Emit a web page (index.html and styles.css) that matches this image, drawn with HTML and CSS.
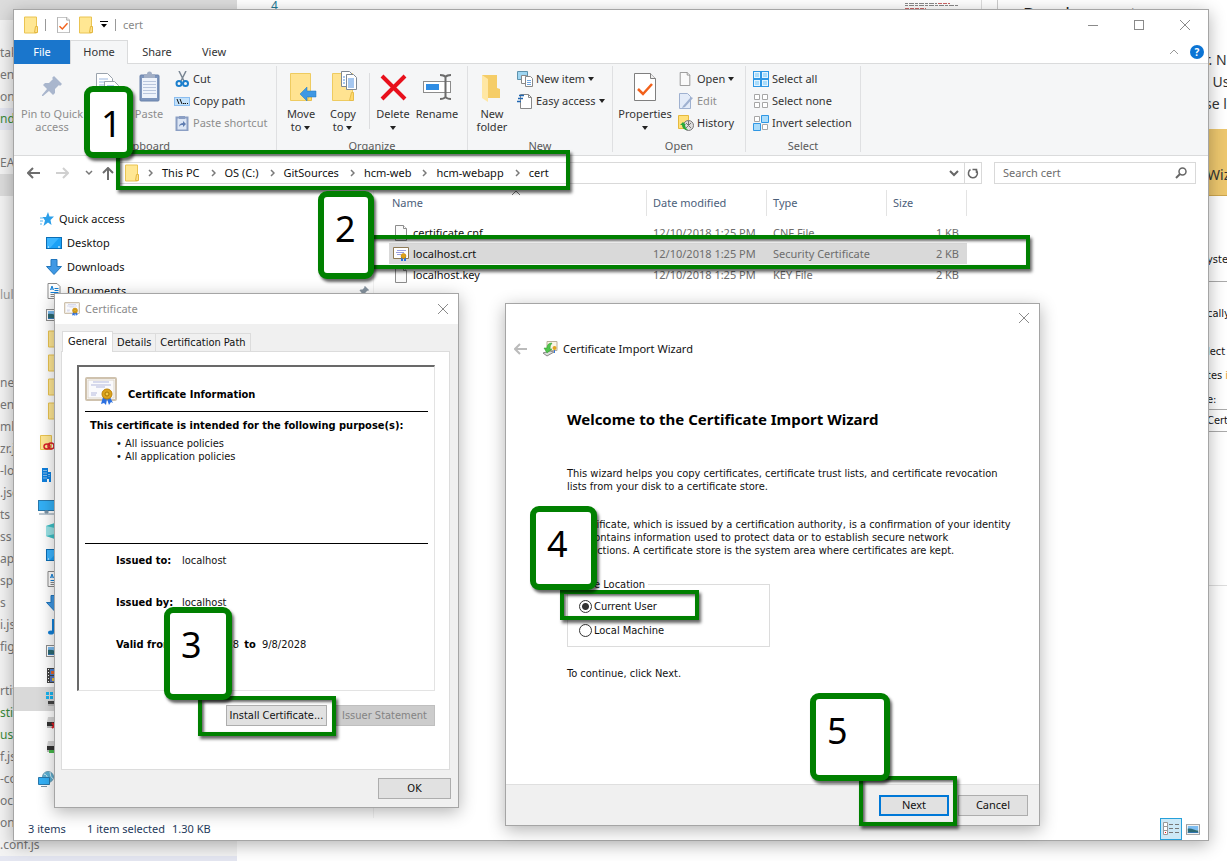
FILE: index.html
```html
<!DOCTYPE html>
<html lang="en">
<head>
<meta charset="utf-8">
<title>cert</title>
<link rel="stylesheet" href="styles.css">
</head>
<body>
<svg class="defs" aria-hidden="true">
  <symbol id="folder" viewBox="0 0 14 18"><path d="M.5 1h12v16H.5z" fill="#ffe793" stroke="#eac452"/><path d="M11.500 10.500h2v6h-3z" fill="#ffe08a" stroke="#e3b840"/></symbol>
  <symbol id="page" viewBox="0 0 14 16"><path d="M1.500.5h8l3 3v12h-11z" fill="#fafafa" stroke="#8c8c8c"/><path d="M9.500.5v3h3" fill="#fff" stroke="#8c8c8c"/></symbol>
  <symbol id="propdoc" viewBox="0 0 22 28"><path d="M.5.500h16l5 5v22H.5z" fill="#fff" stroke="#7f7f7f"/><path d="M16.500.5v5h5" fill="#eee" stroke="#7f7f7f"/><path d="M4 16l5 5 9-10" fill="none" stroke="#f2611b" stroke-width="2.500"/></symbol>
  <symbol id="down" viewBox="0 0 7 4"><path d="M0 0h6L3 4z" fill="#222"/></symbol>
  <symbol id="close" viewBox="0 0 12 12"><path d="M1 1l10 10M11 1L1 11" stroke="#8a8a8a" fill="none"/></symbol>
  <symbol id="cert" viewBox="0 0 32 28"><rect x="1" y="1" width="30" height="22" rx="1" fill="#fff" stroke="#cfc2ae" stroke-width="2"/><rect x="3" y="3" width="26" height="18" fill="#fafafc" stroke="#ddd6ca"/><path d="M8 5h16M6 8h20M11 10h9M6 16h6M6 18h5" stroke="#b4b9dd" fill="none"/><path d="M18 20l-2 7 3-1 2 2 1-6 2 6 2-3 2 1-3-6z" fill="#2c70e0"/><circle cx="22" cy="17" r="5" fill="#dba31c" stroke="#bd8207"/><circle cx="22" cy="17" r="2" fill="#f3ca4b" stroke="#a97704"/></symbol>
  <symbol id="certfile" viewBox="0 0 16 14"><path d="M.5.500h15v11H.5z" fill="#fff" stroke="#8f7a55"/><path d="M4 3.500h9M3 5.500h8M4 7.500h4" stroke="#9b9fe0"/><path d="M8 10h2v4H8zM11 10h2v4h-2z" fill="#2c70e0"/><circle cx="10.500" cy="9" r="2.500" fill="#dfa21a" stroke="#b67c05" stroke-width=".5"/></symbol>
  <symbol id="screen" viewBox="0 0 16 12"><rect x=".5" y=".5" width="15" height="11" fill="#1ba1f6" stroke="#0b6eb5"/><path d="M1 1h12L4 11H1z" fill="#3bb5ff"/><path d="M2 10h1M12 10h2" stroke="#fff"/></symbol>
  <symbol id="pc" viewBox="0 0 17 16"><rect x=".5" y="1.500" width="16" height="10" fill="#33b0f6" stroke="#2a78ab"/><path d="M7 12h3v2H7zM1 15h15" fill="#7a92a5" stroke="#7a92a5"/></symbol>
  <symbol id="arrowdown" viewBox="0 0 16 16"><path d="M5 .5h6v7h4.500L8 15.500.5 7.500H5z" fill="#3f98e4" stroke="#2176bd"/></symbol>
  <symbol id="textdoc" viewBox="0 0 13 16"><path d="M.5.500h9l3 3v12H.5z" fill="#fff" stroke="#8b8b8b"/><path d="M3 7l1.500-4L6 7M3.500 6h2" stroke="#1180d8" fill="none"/><path d="M7 5.500h4M7 7.500h4M3 9.500h8" stroke="#1180d8"/><path d="M3 11.500h8M3 13.500h6" stroke="#888"/></symbol>
  <symbol id="picture" viewBox="0 0 16 12"><rect x=".5" y=".5" width="15" height="11" fill="#fff" stroke="#8d8d8d"/><path d="M2 2h12v5H2z" fill="#7dbdf1"/><path d="M2 5c4-1 8 2 12 2v3H2z" fill="#2d6a73"/><path d="M2 9h12v1H2z" fill="#3579b7"/></symbol>
  <symbol id="drive" viewBox="0 0 16 14"><path d="M2 1h14v5H1z" fill="#d5d5d5"/><path d="M1 6h15v4H1z" fill="#333"/><path d="M1 10h15v2H1z" fill="#bdbdbd"/></symbol>
  <symbol id="pin" viewBox="0 0 20 20"><path d="M12 0l8 8-2 2-1-1-4 4v4l-2 2-4-4-6 5-1 0 0-1 5-6-4-4 2-2h4l4-4-1-1z"/></symbol>
  <symbol id="back" viewBox="0 0 13 12"><path d="M6 1L1 6l5 5M1 6h12" fill="none" stroke="currentColor" stroke-width="2"/></symbol>
  <symbol id="chev" viewBox="0 0 5 8"><path d="M1 1l3 3-3 3" fill="none" stroke="#7a7a7a" stroke-width="1.500"/></symbol>
</svg>

<div class="editor-side" aria-hidden="true">
  <div class="side-head"></div>
  <div class="line">tak</div><div class="line">ent.</div><div class="line">on</div><div class="line green hl">nd</div><div class="line"></div><div class="line">EAD</div><div class="line bar"></div>
  <div class="line"></div><div class="line"></div><div class="line"></div><div class="line"></div><div class="line dim">lule</div><div class="line"></div><div class="line"></div><div class="line"></div>
  <div class="line">ne</div><div class="line">ent</div><div class="line">ml</div><div class="line">zr.j</div><div class="line">-lo</div><div class="line">.jsc</div><div class="line">ts</div><div class="line">ss</div><div class="line">ap</div><div class="line">sp</div><div class="line">s</div><div class="line">i.js</div><div class="line">fig</div><div class="line"></div><div class="line">rtif</div><div class="line green">sti</div><div class="line green">ust</div><div class="line">f.js</div><div class="line">-co</div><div class="line">ock</div><div class="line">on</div><div class="line">.conf.js</div><div class="line hl"></div>
</div>
<div class="editor-top"><span>4</span></div>
<svg class="minimap" width="60" height="10"><path d="M0 3.500h32M0 5.500h54" stroke="#888" stroke-dasharray="3 1 5 1"/><path d="M33 3.500h12M0 8.500h21" stroke="#c66" stroke-dasharray="4 1"/></svg>
<div class="article">
  <div class="art-title">Development</div>
  <div class="art-line">r. N</div><div class="art-line">. Us</div><div class="art-line">se l</div>
  <div class="art-box">Wiz</div>
  <div class="art-dialog">
    <p class="d1">yste</p><p class="d2">cally</p><p class="d3">lect</p><p class="d3">tes <i>i</i></p><p class="d4">e:</p><p class="d5">Certi</p>
  </div>
</div>

<main class="explorer window">
  <header class="titlebar">
    <svg class="tb-folder" width="14" height="18"><use href="#folder"/></svg><i class="vbar"></i>
    <svg class="tb-prop" width="13" height="16"><use href="#propdoc"/></svg>
    <svg class="tb-folder2" width="14" height="18"><use href="#folder"/></svg>
    <svg class="tb-more" width="8" height="8" viewBox="0 0 8 8"><path d="M0 .5h8" stroke="#000"/><path d="M1 3h6L4 6.500z"/></svg><i class="vbar"></i>
    <h1>cert</h1>
    <div class="win-controls">
      <button aria-label="Minimize"><svg width="12" height="12"><path d="M1 6.500h10" stroke="#8a8a8a"/></svg></button>
      <button aria-label="Maximize"><svg width="12" height="12"><rect x="1.500" y="1.500" width="9" height="9" fill="none" stroke="#8a8a8a"/></svg></button>
      <button aria-label="Close"><svg width="12" height="12"><use href="#close"/></svg></button>
    </div>
  </header>
  <nav class="tabs">
    <button class="file">File</button><button class="active">Home</button><button class="share">Share</button><button>View</button>
    <span class="help"><svg width="10" height="6"><path d="M1 5l4-4 4 4" fill="none" stroke="#999"/></svg><b>?</b></span>
  </nav>
  <section class="ribbon">
    <div class="group g-clip">
      <div class="tools">
        <button class="big wide off"><svg width="32" height="32" viewBox="-6 -5 32 32" fill="#a9b6cd"><use href="#pin" width="20" height="20"/></svg>Pin to Quick<br>access</button>
        <button class="big"><svg width="32" height="32" viewBox="0 0 32 32"><path d="M5.500 2.500h11l5 5v18h-16z" fill="#fff" stroke="#9aa3ad"/><path d="M8 8h9M8 11h9M8 14h9" stroke="#9bb7e0"/><path d="M13.500 10.500h10l4 4v14h-14z" fill="#fff" stroke="#9aa3ad"/><path d="M16 15h7M16 18h9" stroke="#5b95d8"/></svg></button>
        <button class="big off"><svg width="32" height="32" viewBox="0 0 32 32"><rect x="7" y="4" width="19" height="26" rx="1" fill="#7d95bd" stroke="#6a82aa"/><path d="M9 7h15v20H9z" fill="#eef3fb"/><path d="M10 10.500h13M10 13.500h13M10 16.500h13M10 19.500h13M10 22.500h13" stroke="#b9c6dd"/><path d="M11 3h3a2 2 0 0 1 5 0h3v4H11z" fill="#a2afc6"/></svg>Paste</button>
        <div class="small">
          <button><svg width="16" height="16"><path d="M5 0l5 10M12 0L7 10" stroke="#7a8794" stroke-width="1.500"/><circle cx="5" cy="12.500" r="2.500" fill="none" stroke="#1b7fcd" stroke-width="2"/><circle cx="11.500" cy="12.500" r="2.500" fill="none" stroke="#1b7fcd" stroke-width="2"/></svg>Cut</button>
          <button><svg width="16" height="16"><rect x=".5" y="4.500" width="15" height="8" fill="#c2e1fa" stroke="#8abdf0"/><path d="M3 6l2 5M6 6l2 5M9 10.500h1.500M11 10.500h1M13 10.500h1" stroke="#111"/></svg>Copy path</button>
          <button class="off"><svg width="16" height="16"><path d="M2.500 2.500h11v13h-11z" fill="#dce6f5" stroke="#8b9fc4" stroke-width="2"/><path d="M5 1h6v3H5z" fill="#8b9fc4"/><path d="M5 12c0-3 2-4 4-4V6l3 3-3 3v-2c-2 0-3 0-4 2z" fill="#5f7db1"/></svg>Paste shortcut</button>
        </div>
      </div>
      <h2>Clipboard</h2>
    </div>
    <div class="group g-org">
      <div class="tools">
        <button class="big"><svg width="32" height="32" viewBox="0 0 32 32"><path d="M5.500 2.500h20v27h-20z" fill="#ffe391" stroke="#eecb60"/><path d="M24.500 21.500h2v8h-4z" fill="#ffd86b" stroke="#e6bd4a"/><path d="M15 23l7-7v4h9v6h-9v4z" fill="#3f98e4" stroke="#2176bd" stroke-width=".5"/></svg>Move<br>to <svg class="dd" width="7" height="4"><use href="#down"/></svg></button>
        <button class="big"><svg width="32" height="32" viewBox="0 0 32 32"><path d="M5.500 2.500h20v27h-20z" fill="#ffe391" stroke="#eecb60"/><path d="M24.500 21.500h2v8h-4z" fill="#ffd86b" stroke="#e6bd4a"/><path d="M14.500.5h8l3 3v12h-11z" fill="#fff" stroke="#7f8892"/><path d="M19.500 3.500h7l3 3v12h-10z" fill="#fff" stroke="#7f8892"/><path d="M21 8h6M21 10h6M21 12h6M21 14h6M21 16h6M16 6h2M16 9h2M16 12h2" stroke="#4c8fe0"/></svg>Copy<br>to <svg class="dd" width="7" height="4"><use href="#down"/></svg></button>
        <i class="sep"></i>
        <button class="big"><svg width="32" height="32"><path d="M5 5l23 23M28 5L5 28" stroke="#e8101c" stroke-width="4"/></svg>Delete<br><svg class="dd" width="7" height="4"><use href="#down"/></svg></button>
        <button class="big mid"><svg width="32" height="32"><rect x="2.500" y="10.500" width="27" height="11" fill="#fff" stroke="#8c8c8c"/><path d="M5 13h13v6H5z" fill="#2f8de4"/><path d="M24.500 5v22M19 4q4 0 5.500 2Q26 4 30 4M19 28q4 0 5.500-2 1.500 2 5.500 2" stroke="#6b6b6b" stroke-width="2" fill="none"/></svg>Rename</button>
      </div>
      <h2>Organize</h2>
    </div>
    <div class="group g-new">
      <div class="tools">
        <button class="big"><svg width="32" height="32"><path d="M6 4h15v13l3 1v9H6z" fill="#f5cd68"/><path d="M6 4l6 4v23l-6-4z" fill="#ffe7a4"/></svg>New<br>folder</button>
        <div class="small">
          <button><svg width="16" height="16"><path d="M.5.500h10v8H.5z" fill="#9fd6f2" stroke="#5e93ad"/><path d="M4.500 4.500h5v8h-5z" fill="#fff" stroke="#888"/><path d="M8.500 5.500h5l2 2v8h-7z" fill="#fff" stroke="#888"/><path d="M10 9.500h4M10 11.500h4M10 13.500h4" stroke="#6fa5e0"/></svg>New item <svg class="dd" width="7" height="4"><use href="#down"/></svg></button>
          <button><svg width="16" height="16"><path d="M3.500 1.500h8l3 3v11h-11z" fill="#fff" stroke="#888"/><path d="M11.500 1.500v3h3" fill="none" stroke="#888"/><path d="M2 2.500h5M1 5.500h5M0 8.500h4" stroke="#2167b2" stroke-width="1.500"/></svg>Easy access <svg class="dd" width="7" height="4"><use href="#down"/></svg></button>
        </div>
      </div>
      <h2>New</h2>
    </div>
    <div class="group g-open">
      <div class="tools">
        <button class="big props"><svg width="32" height="32" viewBox="-5 -2 32 32"><use href="#propdoc" width="22" height="28"/></svg>Properties<br><svg class="dd" width="7" height="4"><use href="#down"/></svg></button>
        <div class="small">
          <button><svg width="16" height="16"><use href="#page" x="0" y="1" width="14" height="14"/></svg>Open <svg class="dd" width="7" height="4"><use href="#down"/></svg></button>
          <button class="off"><svg width="16" height="16"><path d="M1.500.5h8l3 3v12h-11z" fill="#e3ebf8" stroke="#9fb1d0"/><path d="M5 13l8-9 2 1-8 9-3 1z" fill="#9fb1d0"/></svg>Edit</button>
          <button><svg width="16" height="16"><path d="M.5.500h10v13H.5z" fill="#ffe07a" stroke="#e5b93e"/><circle cx="10.500" cy="10.500" r="5" fill="#ddd" stroke="#777"/><path d="M8 8l5 5M13 8l-5 5M10.500 6v4" stroke="#777"/><path d="M2 10l3-3 3 3H7q0 3 3 5-6 0-6-5z" fill="#27a83b"/></svg>History</button>
        </div>
      </div>
      <h2>Open</h2>
    </div>
    <div class="group g-sel">
      <div class="tools">
        <div class="small">
          <button><svg width="16" height="16"><path d="M0 0h16v16H0z" fill="#2f97e4"/><path d="M1 1h6v6H1zM9 1h6v6H9zM1 9h6v6H1zM9 9h6v6H9z" fill="#e4f4ff"/><path d="M2 2h4v4H2zM10 2h4v4h-4zM2 10h4v4H2zM10 10h4v4h-4z" fill="#a9dcfb"/></svg>Select all</button>
          <button><svg width="16" height="16"><path d="M1.500 1.500h5v5h-5zM9.500 1.500h5v5h-5zM1.500 9.500h5v5h-5zM9.500 9.500h5v5h-5z" fill="#fff" stroke="#a6a6a6"/></svg>Select none</button>
          <button><svg width="16" height="16"><path d="M1.500 1.500h5v5h-5zM9.500 9.500h5v5h-5z" fill="#fff" stroke="#a6a6a6"/><path d="M8.500.5h7v7h-7zM.5 8.500h7v7h-7z" fill="#a9dcfb" stroke="#2f97e4"/></svg>Invert selection</button>
        </div>
      </div>
      <h2>Select</h2>
    </div>
  </section>
  <div class="address">
    <button class="nav-b" aria-label="Back"><svg width="13" height="12"><use href="#back"/></svg></button>
    <button class="nav-b fwd" aria-label="Forward"><svg width="13" height="12" viewBox="0 0 13 12"><path d="M7 1l5 5-5 5M12 6H0" fill="none" stroke="#d0d0d0" stroke-width="2"/></svg></button>
    <button class="nav-c" aria-label="Recent"><svg width="8" height="6"><path d="M1 1l3 3 3-3" fill="none" stroke="#777" stroke-width="1.500"/></svg></button>
    <button class="nav-u" aria-label="Up"><svg width="12" height="13"><path d="M1 6l5-5 5 5M6 1v12" fill="none" stroke="#6d6d6d" stroke-width="2"/></svg></button>
    <nav class="crumbs"><svg width="14" height="18"><use href="#folder"/></svg><svg class="cv" width="5" height="8"><use href="#chev"/></svg><a href="#">This PC</a><svg class="cv" width="5" height="8"><use href="#chev"/></svg><a href="#">OS (C:)</a><svg class="cv" width="5" height="8"><use href="#chev"/></svg><a href="#">GitSources</a><svg class="cv" width="5" height="8"><use href="#chev"/></svg><a href="#">hcm-web</a><svg class="cv" width="5" height="8"><use href="#chev"/></svg><a href="#">hcm-webapp</a><svg class="cv" width="5" height="8"><use href="#chev"/></svg><a href="#">cert</a>
      <svg class="drop" width="10" height="7"><path d="M1 1l4 4 4-4" fill="none" stroke="#666" stroke-width="2"/></svg></nav>
    <button class="refresh" aria-label="Refresh"><svg width="12" height="12"><path d="M3.500 2.500A4.500 4.500 0 1 0 9 3" fill="none" stroke="#666" stroke-width="1.500"/><path d="M5.500 2.500H9.500V6" fill="none" stroke="#666" stroke-width="1.500"/></svg></button>
    <label class="search"><input type="text" placeholder="Search cert" aria-label="Search cert"><svg width="12" height="12"><circle cx="7.500" cy="4.500" r="3.500" fill="none" stroke="#666" stroke-width="1.500"/><path d="M5 7l-4 4" stroke="#666" stroke-width="2"/></svg></label>
  </div>
  <div class="content">
    <aside class="tree">
      <div class="node root"><svg width="14" height="14" viewBox="0 0 14 14"><path d="M8 0l1.500 4.500H14L10.500 8l1 5L8 10.500 3.500 14 5 8.500 2.500 5H6z" fill="#2c9fe9"/><path d="M0 6h3M0 9h3M0 12h2" stroke="#58b5f0"/></svg>Quick access</div>
      <div class="node"><svg width="16" height="12"><use href="#screen"/></svg>Desktop</div>
      <div class="node"><svg width="16" height="16"><use href="#arrowdown"/></svg>Downloads</div>
      <div class="node"><svg width="16" height="16"><use href="#textdoc"/></svg>Documents<svg class="pinned" width="10" height="10" fill="#8794a0"><use href="#pin"/></svg></div>
      <div class="node"><svg width="16" height="12"><use href="#picture"/></svg></div>
      <div class="node"><svg width="18" height="18"><use href="#folder"/></svg></div>
      <div class="node"><svg width="18" height="18"><use href="#folder"/></svg></div>
      <div class="node"><svg width="18" height="18"><use href="#folder"/></svg></div>
      <div class="node"><svg width="18" height="18"><use href="#folder"/></svg></div>
      <div class="node root gap"><svg width="15" height="16"><path d="M.5.500h11v14H.5z" fill="#ffe793" stroke="#eac452"/><ellipse cx="7" cy="11.500" rx="3" ry="2.500" fill="none" stroke="#d8222a" stroke-width="1.500"/><ellipse cx="11" cy="11" rx="3" ry="3" fill="none" stroke="#d8222a" stroke-width="1.500"/></svg></div>
      <div class="node root gap"><svg width="14" height="14"><path d="M2 0h6v4h3v10H9v-3H7v3H2z" fill="#0f7fdd"/><path d="M4 2v9M6 2v9M9 6v3" stroke="#fff" stroke-dasharray="1 1.500"/></svg></div>
      <div class="node pcroot gap"><svg width="17" height="16"><use href="#pc"/></svg></div>
      <div class="node"><svg width="16" height="16"><path d="M0 3l9-3v16l-9-3z" fill="#9be3e6"/><path d="M0 3l9-3v5zM0 13l9 3v-5z" fill="#3cc0c6"/></svg></div>
      <div class="node"><svg width="16" height="12"><use href="#screen"/></svg></div>
      <div class="node"><svg width="16" height="16"><use href="#textdoc"/></svg></div>
      <div class="node"><svg width="16" height="16"><use href="#arrowdown"/></svg></div>
      <div class="node"><svg width="16" height="16"><ellipse cx="5" cy="13.500" rx="3" ry="2" fill="#1180d8"/><path d="M7 13V0q3 4 5 5" stroke="#1180d8" stroke-width="2" fill="none"/></svg></div>
      <div class="node"><svg width="16" height="12"><use href="#picture"/></svg></div>
      <div class="node"><svg width="16" height="15"><path d="M1 0h14v15H1z" fill="#444"/><path d="M4 1h11v6H4z" fill="#4b7fd0"/><path d="M4 8h11v6H4z" fill="#5575c0"/><path d="M5 3h4v3H5z" fill="#e2662a"/><path d="M6 10h5v3H6z" fill="#e8bd3b"/><path d="M2.500 1v14" stroke="#fff" stroke-dasharray="1 2"/></svg></div>
      <div class="node sel"><svg width="16" height="16"><path d="M0 1h3v3H0zM4 1h3v3H4zM0 5h3v3H0zM4 5h3v3H4z" fill="#18b5f1"/><path d="M2 10h14v3H2z" fill="#444"/><path d="M2 13h14v2H2z" fill="#bbb"/></svg></div>
      <div class="node"><svg width="16" height="14"><use href="#drive"/><path d="M6 7l5 5M11 7l-5 5" stroke="#e01b24" stroke-width="2"/></svg></div>
      <div class="node"><svg width="16" height="14"><use href="#drive"/><path d="M3 10h13v3H3z" fill="#47b94b"/></svg></div>
      <div class="node pcroot gap"><svg width="17" height="16"><circle cx="10" cy="6" r="5.500" fill="#5bb0d4" stroke="#6e9db4"/><path d="M6 3q4 1 3 5M12 1q0 5 3 7" stroke="#d3ecf5" fill="none"/><path d="M.5 6.500h11v7H.5z" fill="#33b0f6" stroke="#2a78ab"/><path d="M3 15.500h6" stroke="#7a92a5"/></svg></div>
    </aside>
    <section class="files">
      <table>
        <thead><tr><th class="c-name">Name<svg class="sort" width="9" height="5"><path d="M0 5l4-4 4 4" fill="none" stroke="#777"/></svg></th><th class="c-date">Date modified</th><th class="c-type">Type</th><th class="c-size">Size</th></tr></thead>
        <tbody>
          <tr><td><span><svg width="16" height="16"><use href="#page"/></svg>certificate.cnf</span></td><td>12/10/2018 1:25 PM</td><td>CNF File</td><td class="num">1 KB</td></tr>
          <tr class="selected"><td><span><svg width="16" height="14"><use href="#certfile"/></svg>localhost.crt</span></td><td>12/10/2018 1:25 PM</td><td>Security Certificate</td><td class="num">2 KB</td></tr>
          <tr><td><span><svg width="16" height="16"><use href="#page"/></svg>localhost.key</span></td><td>12/10/2018 1:25 PM</td><td>KEY File</td><td class="num">2 KB</td></tr>
        </tbody>
      </table>
    </section>
  </div>
  <footer class="status"><span class="s1">3 items</span><span class="s2">1 item selected</span><span class="s3">1.30 KB</span>
    <div class="views"><button class="on" aria-label="Details"><svg width="16" height="14"><path d="M.5.500h4v4h-4zM.5 4.500h4v4h-4zM.5 8.500h4v4h-4z" fill="#fff" stroke="#999"/><path d="M6 2.500h4M12 2.500h4M6 6.500h4M12 6.500h4M6 10.500h4M12 10.500h4" stroke="#777"/><path d="M2 10h1v1H2z" fill="red"/></svg></button><button aria-label="Large icons"><svg width="14" height="11"><use href="#picture"/></svg></button></div>
  </footer>
</main>

<section class="certificate window">
  <header><svg width="16" height="14"><use href="#cert"/></svg><h2>Certificate</h2><button aria-label="Close certificate"><svg width="12" height="12"><use href="#close"/></svg></button></header>
  <div class="cert-body">
    <nav class="cert-tabs"><button class="active">General</button><button>Details</button><button>Certification Path</button></nav>
    <div class="sheet">
      <div class="info">
        <div class="info-head"><svg width="32" height="28"><use href="#cert"/></svg><h3>Certificate Information</h3></div>
        <div class="purpose"><h4>This certificate is intended for the following purpose(s):</h4><ul><li>All issuance policies</li><li>All application policies</li></ul></div>
        <dl><div><dt>Issued to:</dt><dd>localhost</dd></div><div><dt>Issued by:</dt><dd>localhost</dd></div><div><dt>Valid from</dt><dd>12/10/2018 <b>to</b> 9/8/2028</dd></div></dl>
      </div>
      <div class="actions"><button class="btn">Install Certificate...</button><button class="btn" disabled>Issuer Statement</button></div>
    </div>
    <div class="okrow"><button class="btn">OK</button></div>
  </div>
</section>

<section class="wizard window">
  <div class="wiz-close"><button aria-label="Close wizard"><svg width="12" height="12"><use href="#close"/></svg></button></div>
  <header><button aria-label="Previous"><svg width="13" height="12"><use href="#back"/></svg></button><svg width="16" height="16"><path d="M5 .5h10v9H5z" fill="#faf4e4" stroke="#b8ae98"/><circle cx="12.500" cy="7" r="2" fill="#e0a31d"/><path d="M12 9h1v3h-1z" fill="#3579df"/><path d="M1 12l7-2 4 1-7 4z" fill="#ddd" stroke="#888"/><path d="M10 2q-5 0-5 5H2l3 5 5-4H8q0-4 2-6z" fill="#4fc54b" stroke="#2c972e" stroke-width=".5"/></svg><h2>Certificate Import Wizard</h2></header>
  <div class="wiz-body">
    <h3>Welcome to the Certificate Import Wizard</h3>
    <p class="p1">This wizard helps you copy certificates, certificate trust lists, and certificate revocation<br>lists from your disk to a certificate store.</p>
    <p class="p2">A certificate, which is issued by a certification authority, is a confirmation of your identity<br>and contains information used to protect data or to establish secure network<br>connections. A certificate store is the system area where certificates are kept.</p>
    <fieldset><legend>Store Location</legend><label><input type="radio" name="store" checked>Current User</label><label><input type="radio" name="store">Local Machine</label></fieldset>
    <p>To continue, click Next.</p>
  </div>
  <footer><button class="btn next">Next</button><button class="btn">Cancel</button></footer>
</section>

<div class="mark m-address"></div><div class="mark m-row"></div><div class="mark m-install"></div><div class="mark m-user"></div><div class="mark m-next"></div>
<div class="step s-1">1</div><div class="step s-2">2</div><div class="step s-3">3</div><div class="step s-4">4</div><div class="step s-5">5</div>
</body>
</html>
```
FILE: styles.css
```css
:root {
  --ui: "Noto Sans", "Open Sans", sans-serif;
  --dlg: "DejaVu Sans Condensed", "DejaVu Sans", sans-serif;
  --green: #008000;
}
* { box-sizing: border-box; }
html, body { height: 100%; }
body { margin: 0; overflow: hidden; position: relative; background: #fff; font: 11px/16px var(--ui); color: #111; }
h1, h2, h3, h4, p, ul, dl, dd { margin: 0; padding: 0; font-weight: normal; font-size: inherit; }
button { font: inherit; color: inherit; background: none; border: 0; padding: 0; }
svg { display: block; flex: none; }
i { font-style: normal; }
.defs { position: absolute; width: 0; height: 0; }

/* backdrop */
.editor-side { position: absolute; left: 0; top: 0; bottom: 0; width: 237px; overflow: hidden; background: #f3f3f3; font-size: 12px; color: #777; }
.side-head { height: 20px; margin-bottom: 22px; background: #dcdcdc; }
.line { height: 22px; line-height: 22px; }
.green { color: #3a8a3a; }
.dim { color: #999; }
.hl { background: #e4e6f1; }
.bar { background: #dcdcdc; }
.editor-top { position: absolute; left: 237px; right: 245px; top: 0; height: 22px; padding-left: 34px; font-size: 12px; line-height: 12px; color: #237893; border-right: 1px solid #ddd; }
.minimap { position: absolute; left: 905px; top: 0; }
.article { position: absolute; left: 997px; right: 0; top: 0; bottom: 0; overflow: hidden; font-size: 14px; color: #333; white-space: nowrap; }
.art-title { height: 49px; padding: 3px 0 0 25px; border-left: 1px solid #ccc; font-size: 18px; line-height: 22px; color: #222; }
.art-line { height: 22px; line-height: 22px; padding-left: 208px; }
.art-box { height: 67px; margin-top: 14px; padding: 34px 0 0 210px; line-height: 24px; background: #edc76e; border-bottom: 1px solid #cda64e; }
.art-dialog { height: 390px; border-bottom: 1px solid #ddd; font: 11px/16px var(--dlg); color: #111; padding-top: 56px; }
.art-dialog p { padding-left: 210px; }
.art-dialog i { color: #e8a030; }
.d1 { height: 30px; border-bottom: 1px solid #aaa; }
.d2 { height: 62px; padding-top: 24px; }
.d3 { height: 24px; }
.d4 { height: 17px; }
.d5 { height: 23px; line-height: 21px; border: solid #aaa; border-width: 1px 0; }

.window { position: absolute; display: flex; flex-direction: column; background: #fff; border: 1px solid #a5a5a5; box-shadow: 0 4px 16px rgba(0,0,0,.3); }

/* explorer */
.explorer { left: 13px; right: 18px; top: 9px; bottom: 20px; }
.titlebar { height: 30px; display: flex; align-items: center; padding-left: 10px; }
.vbar { width: 1px; height: 12px; background: #999; }
.tb-folder { margin-right: 7px; }
.tb-prop { margin: 0 9px 0 11px; }
.tb-folder2 { margin-right: 7px; }
.tb-more { margin-right: 7px; }
.titlebar h1 { margin-left: 7px; color: #888; }
.win-controls { margin-left: auto; display: flex; }
.win-controls button { width: 46px; height: 28px; display: grid; place-items: center; }
.tabs { height: 24px; display: flex; border-bottom: 1px solid #dadbdc; }
.tabs button { width: 56px; height: 24px; line-height: 22px; color: #333; }
.tabs .file { background: #1a76cc; color: #fff; }
.tabs .active { width: 58px; padding-bottom: 2px; line-height: 20px; background: #f5f6f7; border: 1px solid #dadbdc; border-bottom: 0; }
.tabs .share { width: 58px; }
.help { margin-left: auto; display: flex; align-items: center; gap: 11px; padding-right: 4px; }
.help b { width: 14px; height: 14px; border-radius: 50%; background: #0b74d4; color: #fff; line-height: 14px; text-align: center; font-size: 10px; }
.ribbon { height: 92px; display: flex; background: #f5f6f7; border-bottom: 1px solid #dadbdc; padding-top: 2px; color: #333; }
.group { height: 86px; display: flex; flex-direction: column; justify-content: space-between; border-right: 1px solid #dfe0e2; }
.group h2 { text-align: center; line-height: 13px; color: #5a5a5a; }
.tools { display: flex; align-items: flex-start; padding: 2px 0 0 3px; height: 70px; }
.g-clip { width: 263px; }
.g-clip .tools { padding-left: 4px; }
.g-org { width: 191px; }
.g-new { width: 145px; }
.g-open { width: 133px; }
.g-sel { width: 115px; }
.big { width: 42px; padding-top: 3px; line-height: 13px; white-space: nowrap; display: block; }
.big > svg:first-child { margin: 0 auto 4px; }
.wide { width: 68px; }
.mid { width: 46px; }
.props { width: 58px; }
.off { color: #8d8d8d; }
.dd { display: inline-block; vertical-align: middle; }
.sep { width: 1px; height: 56px; margin: 5px 2px 0 5px; background: #dcdddf; }
.small { padding-left: 4px; }
.small button { display: flex; align-items: center; gap: 3px; height: 22px; white-space: nowrap; }
.address { height: 34px; display: flex; align-items: center; padding: 0 12px 0 13px; }
.nav-b { width: 29px; color: #6d6d6d; }
.nav-c { width: 17px; }
.nav-u { width: 17px; }
.crumbs { flex: 1; height: 22px; border: 1px solid #d9d9d9; display: flex; align-items: center; padding: 0 5px; }
.crumbs a { color: #111; text-decoration: none; padding-right: 2px; }
.cv { margin: 0 9px; }
.drop { margin-left: auto; }
.refresh { width: 17px; height: 22px; border: 1px solid #d9d9d9; border-left: 0; display: grid; place-items: center; }
.search { width: 202px; height: 22px; margin-left: 12px; border: 1px solid #d9d9d9; display: flex; align-items: center; padding: 0 8px; }
.search input { flex: 1; min-width: 0; border: 0; padding: 0; font: inherit; outline: 0; }
.search input::placeholder { color: #6d6d6d; }
.content { flex: 1; min-height: 0; display: flex; overflow: hidden; }
.tree { width: 360px; padding-top: 17px; border-right: 1px solid #f2f2f2; overflow: hidden; }
.node { height: 24px; display: flex; align-items: center; gap: 5px; padding-left: 32px; }
.root { padding-left: 26px; }
.pcroot { padding-left: 24px; }
.gap { margin-top: 8px; }
.sel { background: #d9d9d9; }
.pinned { margin-left: auto; margin-right: 4px; }
.files { flex: 1; padding-left: 15px; }
table { border-collapse: separate; border-spacing: 0; table-layout: fixed; width: 578px; }
th { height: 26px; padding: 0 0 0 6px; text-align: left; font-weight: normal; color: #4c607a; border-right: 1px solid #e3e3e3; position: relative; }
.c-name { width: 258px; padding-left: 3px; }
.c-date, .c-type { width: 120px; }
.c-size { width: 80px; }
.sort { position: absolute; left: 123px; top: 0; }
thead::after { content: ""; display: block; height: 6px; }
td { height: 21px; padding: 0 0 0 6px; color: #6d6d6d; white-space: nowrap; }
td:first-child { padding-left: 4px; color: #111; }
td span { display: flex; align-items: center; gap: 4px; }
td.num { text-align: right; padding-right: 8px; }
.selected { background: #d9d9d9; }
.status { height: 22px; display: flex; align-items: center; padding-left: 14px; color: #1e395b; }
.s1 { width: 59px; }
.s2 { width: 85px; white-space: nowrap; }
.views { margin-left: auto; display: flex; padding-right: 4px; }
.views button { width: 22px; height: 22px; display: grid; place-items: center; }
.views .on { background: #cce8f6; border: 1px solid #26a0da; }

/* dialogs */
.btn { height: 21px; border: 1px solid #adadad; background: #e1e1e1; color: #111; }
.btn:disabled { background: #ccc; border-color: #bfbfbf; color: #838383; }
.certificate { left: 54px; top: 293px; width: 405px; background: #f0f0f0; font-family: var(--dlg); font-size: 11px; line-height: 13px; }
.certificate header { height: 30px; display: flex; align-items: center; gap: 5px; padding: 0 9px; background: #fff; font: 11px/16px var(--ui); color: #8d8d8d; }
.certificate header button { margin-left: auto; }
.cert-body { padding: 8px 7px; }
.cert-tabs { display: flex; align-items: flex-end; height: 19px; }
.cert-tabs button { height: 18px; padding: 0 4px; white-space: nowrap; border: 1px solid #dcdcdc; border-bottom: 0; border-left: 0; }
.cert-tabs .active { height: 21px; padding: 0 5px 2px; margin-bottom: -1px; background: #fff; border-left: 1px solid #dcdcdc; z-index: 1; }
.sheet { margin: 0 1px 0 -1px; padding: 13px 14px 43px 15px; background: #fff; border: 1px solid #dcdcdc; }
.info { height: 326px; padding: 10px 6px 0; border: 2px solid #696969; border-right: 1px solid #e3e3e3; border-bottom: 1px solid #e3e3e3; }
.info-head { display: flex; gap: 11px; height: 35px; border-bottom: 1px solid #000; }
.info-head h3, .purpose h4, dt, dd b { font-weight: bold; color: #000; white-space: nowrap; }
.info-head h3 { padding-top: 11px; }
.purpose { height: 132px; padding: 7px 5px; border-bottom: 1px solid #000; }
.purpose ul { list-style: none; padding: 5px 0 0 26px; }
.purpose li::before { content: "• "; }
dl { padding: 10px 0 0 31px; }
dl div { display: flex; height: 42px; }
dt { width: 66px; }
dd { white-space: nowrap; }
dd b { margin: 0 3px 0 2px; }
.actions { display: flex; justify-content: flex-end; gap: 7px; margin-top: 14px; }
.actions .btn { width: 101px; white-space: nowrap; }
.okrow { display: flex; justify-content: flex-end; padding-top: 8px; }
.okrow .btn { width: 73px; }

.wizard { left: 505px; top: 303px; width: 535px; height: 523px; font-family: var(--dlg); font-size: 11px; line-height: 13px; }
.wiz-close { height: 28px; display: flex; justify-content: flex-end; align-items: center; padding-right: 9px; }
.wizard header { height: 34px; display: flex; align-items: center; padding-left: 8px; font: 11px/16px var(--ui); }
.wizard header button { color: #bbb; }
.wizard header svg + h2 { margin-left: 5px; }
.wizard header > svg { margin-left: 15px; }
.wiz-body { flex: 1; padding: 42px 24px 0 61px; white-space: nowrap; }
.wiz-body h3 { font: bold 15px/22px var(--ui); color: #000; }
.p1 { margin-top: 37px; }
.p2 { margin-top: 25px; }
fieldset { width: 203px; height: 69px; margin: 21px 0 20px; padding: 3px 3px; border: 1px solid #dcdcdc; }
legend { padding: 0 3px; }
fieldset label { display: flex; align-items: center; gap: 2px; height: 24px; padding-left: 8px; }
fieldset input { appearance: none; width: 13px; height: 13px; margin: 0; border: 1px solid #333; border-radius: 50%; }
fieldset input:checked { background: radial-gradient(circle, #333 3px, #fff 4px); }
.wizard footer { height: 41px; display: flex; align-items: center; justify-content: flex-end; gap: 9px; padding-right: 11px; background: #f0f0f0; border-top: 1px solid #dfdfdf; }
.wizard footer .btn { width: 70px; font: 11px/16px var(--ui); }
.wizard footer .next { border: 2px solid #0078d7; }

/* annotations */
.mark { position: absolute; border: 4px solid var(--green); box-shadow: 2px 3px 3px rgba(0,0,0,.6), inset 2px 2px 3px rgba(0,0,0,.6); }
.step { position: absolute; height: 88px; padding: 7px 0 0 11px; border: 6px solid var(--green); border-radius: 9px; background: #fff; color: #000; font: 36px/50px var(--ui); box-shadow: 2px 3px 3px rgba(0,0,0,.6); }
.m-address { left: 116px; top: 150px; width: 454px; height: 40px; }
.m-row { left: 368px; top: 235px; width: 662px; height: 34px; }
.m-install { left: 198px; top: 696px; width: 138px; height: 40px; }
.m-user { left: 560px; top: 590px; width: 139px; height: 30px; }
.m-next { left: 859px; top: 776px; width: 98px; height: 50px; }
.s-1 { left: 84px; top: 86px; width: 49px; height: 72px; }
.s-2 { left: 318px; top: 191px; width: 56px; }
.s-3 { left: 164px; top: 607px; width: 68px; height: 93px; }
.s-4 { left: 530px; top: 506px; width: 67px; height: 84px; }
.s-5 { left: 810px; top: 693px; width: 80px; }
```
